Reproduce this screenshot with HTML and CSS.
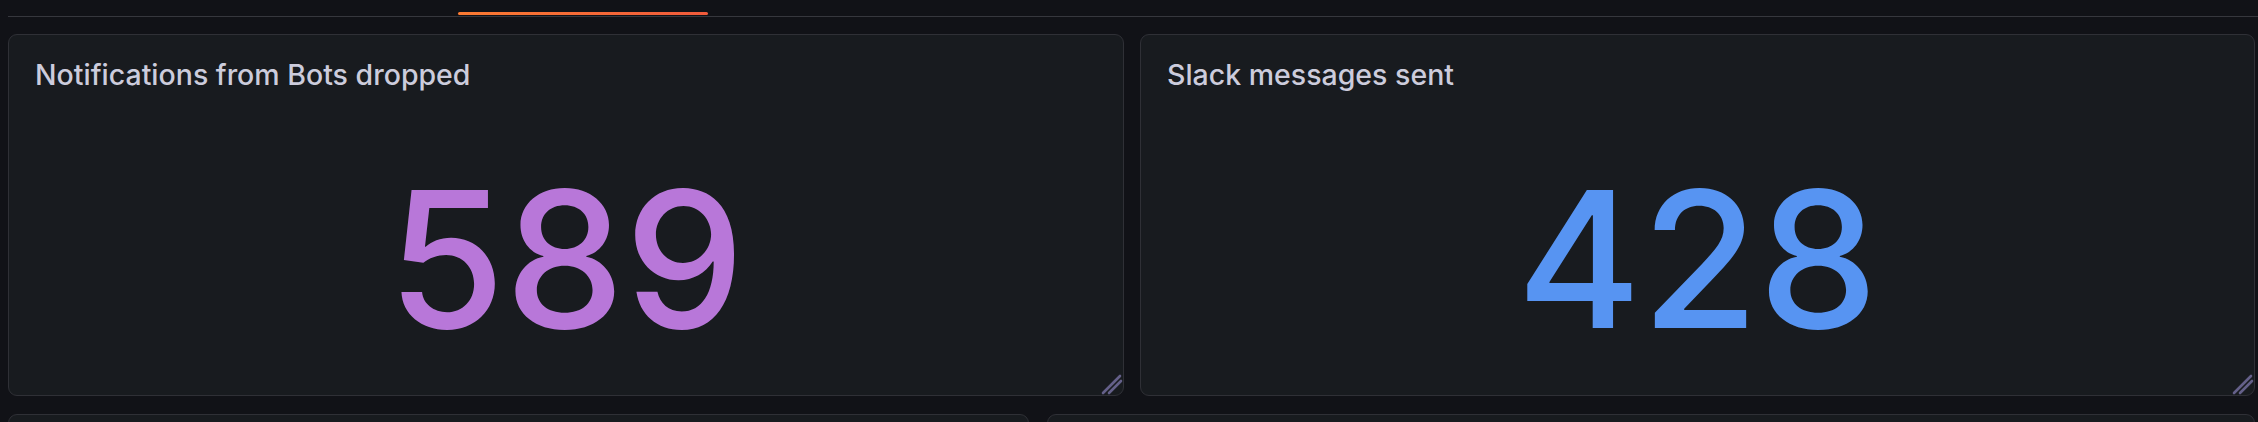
FILE: index.html
```html
<!DOCTYPE html>
<html>
<head>
<meta charset="utf-8">
<link rel="stylesheet" href="styles.css">
</head>
<body>
<div class="tabs">
  <div class="tab active"></div>
</div>
<div class="grid top-row">
  <section class="panel">
    <h2 class="title">Notifications from Bots dropped</h2>
    <div class="value purple">589</div>
    <svg class="resize" width="24" height="24" viewBox="0 0 24 24"><path d="M4 22 L21 5 M10 22 L22 10" stroke="#646089" stroke-width="2.6" stroke-linecap="round" fill="none"/></svg>
  </section>
  <section class="panel">
    <h2 class="title">Slack messages sent</h2>
    <div class="value blue">428</div>
    <svg class="resize" width="24" height="24" viewBox="0 0 24 24"><path d="M4 22 L21 5 M10 22 L22 10" stroke="#646089" stroke-width="2.6" stroke-linecap="round" fill="none"/></svg>
  </section>
</div>
<div class="grid bottom-row">
  <section class="panel short"></section>
  <section class="panel short"></section>
</div>
</body>
</html>
```
FILE: styles.css
```css
html, body {
  margin: 0;
  padding: 0;
  background: #111217;
  font-family: Inter, "Noto Sans", sans-serif;
  overflow: hidden;
  height: 422px;
}
.tabs {
  margin-left: 8px;
  height: 16px;
  border-bottom: 1px solid #36373d;
  display: flex;
}
.tab {
  position: relative;
  margin-left: 450px;
  width: 250px;
}
.tab.active::after {
  content: "";
  position: absolute;
  left: 0;
  right: 0;
  bottom: 1px;
  height: 3px;
  border-radius: 2px;
  background: linear-gradient(90deg, #fb7a32, #f05a3b);
}
.grid {
  display: grid;
  padding: 0 3px 0 8px;
}
.top-row {
  margin-top: 17px;
  grid-template-columns: 1116px 1115px;
  column-gap: 16px;
}
.bottom-row {
  margin-top: 18px;
  grid-template-columns: 1021px 1fr;
  column-gap: 18px;
  height: 8px;
  overflow: hidden;
}
.panel {
  position: relative;
  background: #181b1f;
  border: 1px solid #2f3036;
  border-radius: 9px;
  height: 362px;
  box-sizing: border-box;
  display: flex;
  flex-direction: column;
}
.panel.short {
  height: 40px;
}
.title {
  margin: 0;
  padding: 23px 0 0 26px;
  font-size: 28.5px;
  line-height: 34px;
  font-weight: 500;
  color: #ccccdc;
}
.value {
  flex: 1;
  display: flex;
  align-items: center;
  justify-content: center;
  padding-top: 31px;
  font-size: 190px;
  line-height: 1;
  font-weight: 500;
  letter-spacing: 0;
}
.purple { color: #b877d9; }
.blue { color: #5794f2; }
.resize {
  position: absolute;
  right: 0;
  bottom: 0;
}
```
